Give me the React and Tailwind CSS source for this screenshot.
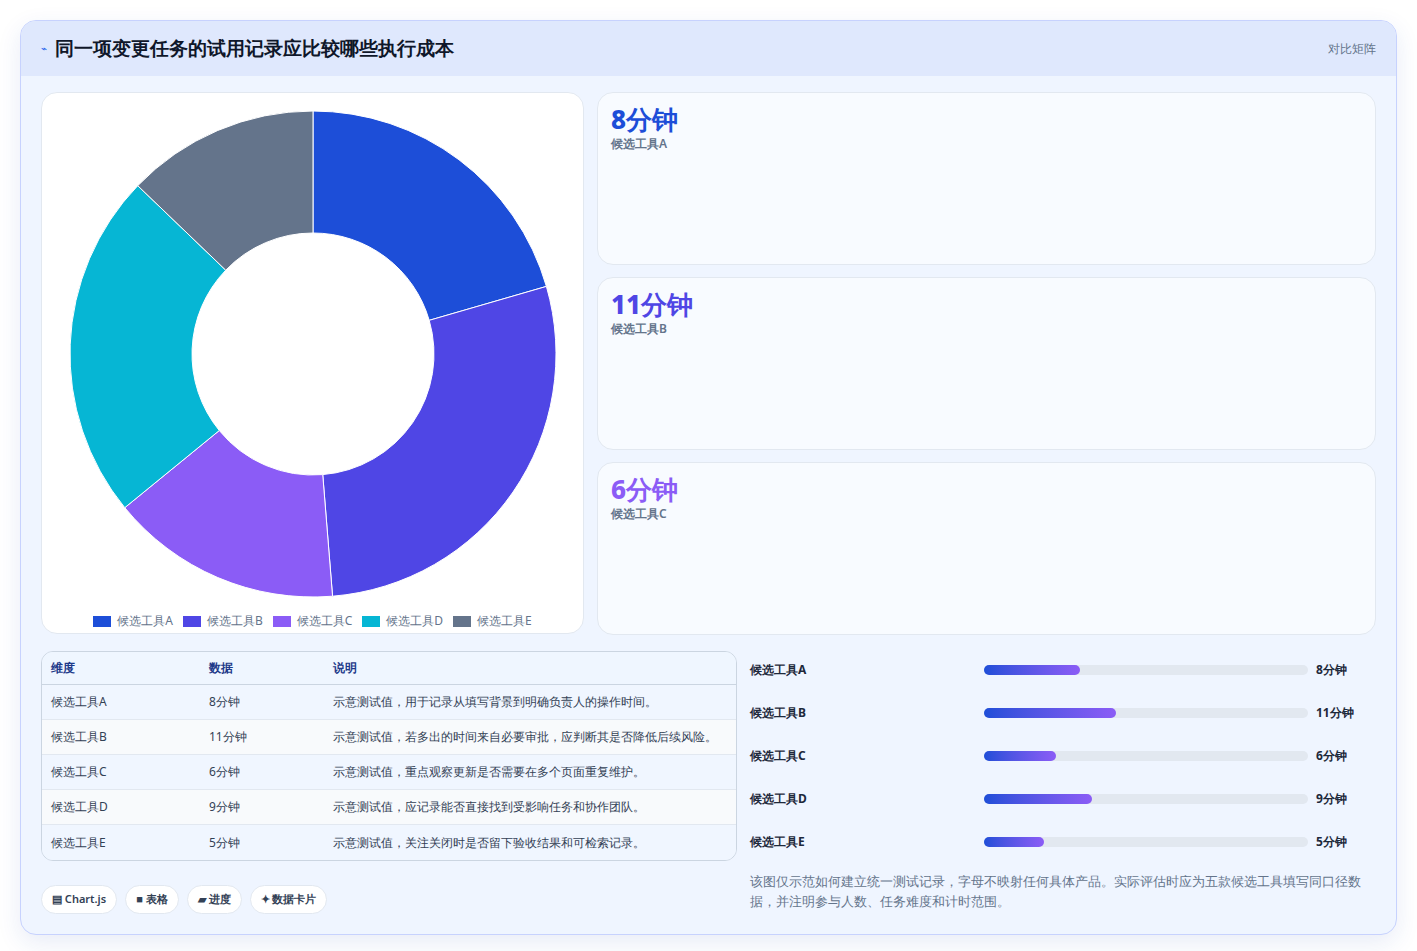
import React from 'react';

const DATA = [
  { name: '候选工具A', v: 8, color: '#1d4ed8', desc: '示意测试值，用于记录从填写背景到明确负责人的操作时间。' },
  { name: '候选工具B', v: 11, color: '#4f46e5', desc: '示意测试值，若多出的时间来自必要审批，应判断其是否降低后续风险。' },
  { name: '候选工具C', v: 6, color: '#8b5cf6', desc: '示意测试值，重点观察更新是否需要在多个页面重复维护。' },
  { name: '候选工具D', v: 9, color: '#06b6d4', desc: '示意测试值，应记录能否直接找到受影响任务和协作团队。' },
  { name: '候选工具E', v: 5, color: '#64748b', desc: '示意测试值，关注关闭时是否留下验收结果和可检索记录。' },
];

const STATS = [
  { v: '8分钟', n: '候选工具A', cls: 'text-[#1d4ed8]' },
  { v: '11分钟', n: '候选工具B', cls: 'text-[#4f46e5]' },
  { v: '6分钟', n: '候选工具C', cls: 'text-[#8b5cf6]' },
];

function Donut() {
  const total = DATA.reduce((s, d) => s + d.v, 0);
  const cx = 250, cy = 250, R = 243, r = 121;
  let a = -Math.PI / 2;
  const pt = (rad, ang) => [cx + rad * Math.cos(ang), cy + rad * Math.sin(ang)];
  return (
    <svg width="500" height="500" viewBox="0 0 500 500">
      {DATA.map(d => {
        const a0 = a, a1 = a + (d.v / total) * Math.PI * 2;
        a = a1;
        const large = a1 - a0 > Math.PI ? 1 : 0;
        const [x0, y0] = pt(R, a0), [x1, y1] = pt(R, a1), [x2, y2] = pt(r, a1), [x3, y3] = pt(r, a0);
        return <path key={d.name} fill={d.color} stroke="#fff" strokeWidth="1"
          d={`M${x0} ${y0}A${R} ${R} 0 ${large} 1 ${x1} ${y1}L${x2} ${y2}A${r} ${r} 0 ${large} 0 ${x3} ${y3}Z`} />;
      })}
    </svg>
  );
}

export default function App() {
  return (
    <div className="min-h-screen bg-white px-5 pt-5 pb-5 font-['Noto_Sans','Noto_Sans_CJK_SC',sans-serif]">
      <div className="rounded-2xl border border-[#c7d2fe] bg-[#eff5ff] overflow-hidden shadow-[0_8px_24px_rgba(30,64,175,0.10)]">
        <div className="h-[55px] bg-[#dfe8fd] flex items-center justify-between px-5">
          <div className="flex items-center gap-2">
            <span className="text-[#2563eb] text-[10px]">⌁</span>
            <h1 className="text-[19px] font-bold text-[#0f172a]">同一项变更任务的试用记录应比较哪些执行成本</h1>
          </div>
          <span className="text-[12px] text-[#64748b]">对比矩阵</span>
        </div>
        <div className="px-5 pt-4 pb-5">
          <div className="flex gap-[13px]">
            <div className="w-[543px] h-[542px] shrink-0 rounded-2xl border border-[#e2e8f0] bg-white flex flex-col items-center pt-[11px]">
              <Donut />
              <div className="flex items-center gap-[10px] mt-[8px] text-[12px] text-[#64748b]">
                {DATA.map(d => (
                  <span key={d.name} className="flex items-center gap-[6px]">
                    <span className="w-[18px] h-[11px]" style={{ background: d.color }} />{d.name}
                  </span>
                ))}
              </div>
            </div>
            <div className="flex-1 flex flex-col gap-[12px]">
              {STATS.map(s => (
                <div key={s.n} className="h-[173px] rounded-2xl border border-[#e2e8f0] bg-[#f8fbff] px-[13px] pt-[10px]">
                  <div className={`text-[26px] font-extrabold leading-[32px] ${s.cls}`}>{s.v}</div>
                  <div className="text-[12px] font-semibold text-[#64748b]">{s.n}</div>
                </div>
              ))}
            </div>
          </div>
          <div className="flex gap-[13px] mt-[16px]">
            <div className="w-[696px] shrink-0">
              <div className="rounded-xl border border-[#cbd5e1] overflow-hidden text-[12px] text-[#334155]">
                <div className="flex h-[33px] items-center bg-[#eff6ff] border-b border-[#cbd5e1] font-bold text-[#1e3a8a]">
                  <span className="w-[167px] pl-[9px]">维度</span><span className="w-[124px]">数据</span><span>说明</span>
                </div>
                {DATA.map((d, i) => (
                  <div key={d.name} className={`flex h-[35px] items-center ${i < 4 ? 'border-b border-[#e2e8f0]' : ''} ${i % 2 ? 'bg-[#f8fafc]' : 'bg-[#f0f6ff]'}`}>
                    <span className="w-[167px] pl-[9px]">{d.name}</span><span className="w-[124px]">{d.v}分钟</span><span className="whitespace-nowrap">{d.desc}</span>
                  </div>
                ))}
              </div>
              <div className="flex gap-[8px] mt-[24px] text-[11px] text-[#334155]">
                {['▤ Chart.js', '■ 表格', '▰ 进度', '✦ 数据卡片'].map(t => (
                  <span key={t} className="h-[29px] px-[10px] flex items-center rounded-full bg-white border border-[#e2e8f0] font-semibold">{t}</span>
                ))}
              </div>
            </div>
            <div className="flex-1">
              <div className="flex flex-col gap-[24px] pt-[9px]">
                {DATA.map(d => (
                  <div key={d.name} className="flex items-center h-[19px] text-[12px] font-bold text-[#1e293b]">
                    <span className="w-[234px]">{d.name}</span>
                    <div className="w-[324px] h-[10px] rounded-full bg-[#e2e8f0]">
                      <div className="h-full rounded-full bg-gradient-to-r from-[#1d4ed8] to-[#8b5cf6]" style={{ width: `${(d.v / 27) * 100}%` }} />
                    </div>
                    <span className="ml-[8px]">{d.v}分钟</span>
                  </div>
                ))}
              </div>
              <p className="mt-[20px] text-[13px] leading-[20px] text-[#64748b]">该图仅示范如何建立统一测试记录，字母不映射任何具体产品。实际评估时应为五款候选工具填写同口径数据，并注明参与人数、任务难度和计时范围。</p>
            </div>
          </div>
        </div>
      </div>
    </div>
  );
}
